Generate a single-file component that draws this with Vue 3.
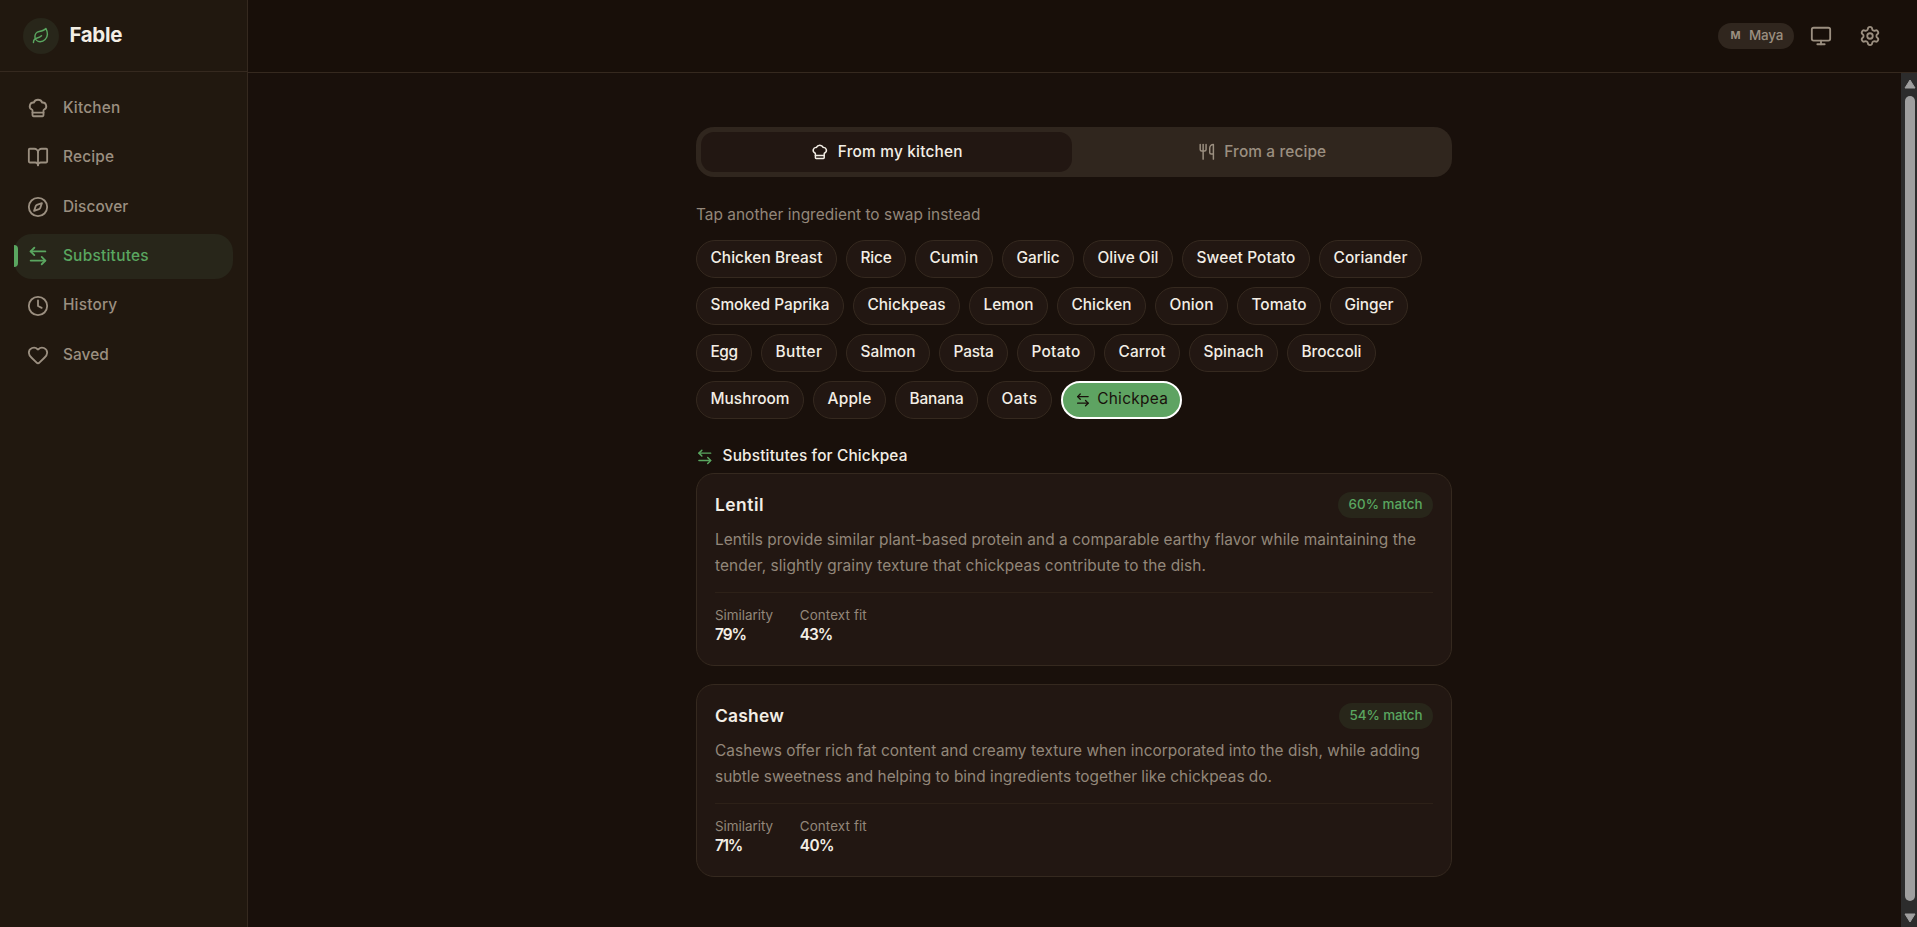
<script setup>
import { ref } from "vue";

const icons = {
  leaf: [
    "M11 20A7 7 0 0 1 9.8 6.1C15.5 5 17 4.48 19 2c1 2 2 4.18 2 8 0 5.5-4.78 10-10 10Z",
    "M2 21c0-3 1.85-5.36 5.08-6C9.5 14.52 12 13 13 12",
  ],
  chef: [
    "M17 21a1 1 0 0 0 1-1v-5.35c0-.457.316-.844.727-1.041a4 4 0 0 0-2.134-7.589 5 5 0 0 0-9.186 0 4 4 0 0 0-2.134 7.588c.411.198.727.585.727 1.041V20a1 1 0 0 0 1 1Z",
    "M6 17h12",
  ],
  book: [
    "M12 7v14",
    "M3 18a1 1 0 0 1-1-1V4a1 1 0 0 1 1-1h5a4 4 0 0 1 4 4 4 4 0 0 1 4-4h5a1 1 0 0 1 1 1v13a1 1 0 0 1-1 1h-6a3 3 0 0 0-3 3 3 3 0 0 0-3-3z",
  ],
  compass: [
    "M12 2a10 10 0 1 0 0 20 10 10 0 1 0 0-20Z",
    "m16.24 7.76-1.804 5.411a2 2 0 0 1-1.265 1.265L7.76 16.24l1.804-5.411a2 2 0 0 1 1.265-1.265z",
  ],
  swap: ["M8 3 4 7l4 4", "M4 7h16", "m16 21 4-4-4-4", "M20 17H4"],
  clock: ["M12 2a10 10 0 1 0 0 20 10 10 0 1 0 0-20Z", "M12 6v6l4 2"],
  heart: [
    "M2 9.5a5.5 5.5 0 0 1 9.591-3.676.56.56 0 0 0 .818 0A5.49 5.49 0 0 1 22 9.5c0 2.29-1.5 4-3 5.5l-5.492 5.313a2 2 0 0 1-3 .019L5 15c-1.5-1.5-3-3.2-3-5.5",
  ],
  utensils: [
    "M3 2v7c0 1.1.9 2 2 2h4a2 2 0 0 0 2-2V2",
    "M7 2v20",
    "M21 15V2a5 5 0 0 0-5 5v6c0 1.1.9 2 2 2h3Zm0 0v7",
  ],
  monitor: [
    "M4 3h16a2 2 0 0 1 2 2v10a2 2 0 0 1-2 2H4a2 2 0 0 1-2-2V5a2 2 0 0 1 2-2Z",
    "M8 21h8",
    "M12 17v4",
  ],
  settings: [
    "M9.671 4.136a2.34 2.34 0 0 1 4.659 0 2.34 2.34 0 0 0 3.319 1.915 2.34 2.34 0 0 1 2.33 4.033 2.34 2.34 0 0 0 0 3.831 2.34 2.34 0 0 1-2.33 4.033 2.34 2.34 0 0 0-3.319 1.915 2.34 2.34 0 0 1-4.659 0 2.34 2.34 0 0 0-3.32-1.915 2.34 2.34 0 0 1-2.33-4.033 2.34 2.34 0 0 0 0-3.831A2.34 2.34 0 0 1 6.35 6.051a2.34 2.34 0 0 0 3.319-1.915",
    "M12 9a3 3 0 1 0 0 6 3 3 0 1 0 0-6Z",
  ],
};

const nav = [
  { label: "Kitchen", icon: "chef", width: 57.5 },
  { label: "Recipe", icon: "book", width: 51.5 },
  { label: "Discover", icon: "compass", width: 65.5 },
  { label: "Substitutes", icon: "swap", width: 86 },
  { label: "History", icon: "clock", width: 54.5 },
  { label: "Saved", icon: "heart", width: 46 },
];
const activePage = ref("Substitutes");

const tabs = [
  { id: "kitchen", label: "From my kitchen", icon: "chef", width: 125 },
  { id: "recipe", label: "From a recipe", icon: "utensils", width: 102 },
];
const activeTab = ref("kitchen");

const ingredients = [
  ["Chicken Breast", 141],
  ["Rice", 60],
  ["Cumin", 78],
  ["Garlic", 72],
  ["Olive Oil", 90],
  ["Sweet Potato", 128],
  ["Coriander", 103],
  ["Smoked Paprika", 148],
  ["Chickpeas", 107],
  ["Lemon", 79],
  ["Chicken", 89],
  ["Onion", 73],
  ["Tomato", 84],
  ["Ginger", 78],
  ["Egg", 56],
  ["Butter", 76],
  ["Salmon", 84],
  ["Pasta", 69],
  ["Potato", 78],
  ["Carrot", 76],
  ["Spinach", 89],
  ["Broccoli", 89],
  ["Mushroom", 108],
  ["Apple", 73],
  ["Banana", 83],
  ["Oats", 65],
  ["Chickpea", 121],
];
const selected = ref("Chickpea");

const substitutes = [
  {
    name: "Lentil",
    nameWidth: 49,
    match: "60% match",
    badge: 95,
    lines: [
      ["Lentils provide similar plant-based protein and a comparable earthy flavor while maintaining the", 701],
      ["tender, slightly grainy texture that chickpeas contribute to the dish.", 491],
    ],
    similarity: ["79%", 31],
    context: ["43%", 32.5],
  },
  {
    name: "Cashew",
    nameWidth: 69,
    match: "54% match",
    badge: 94,
    lines: [
      ["Cashews offer rich fat content and creamy texture when incorporated into the dish, while adding", 705],
      ["subtle sweetness and helping to bind ingredients together like chickpeas do.", 557],
    ],
    similarity: ["71%", 27],
    context: ["40%", 34],
  },
];

// tracks the text so that it spans the given width
const vFit = (el, { value }) => {
  el.style.letterSpacing = "0px";
  const natural = el.getBoundingClientRect().width;
  el.style.letterSpacing = `${(value - natural) / el.textContent.length}px`;
};
</script>

<template>
  <div class="app">
    <aside class="sidebar">
      <div class="brand">
        <span class="logo">
          <svg class="icon small" viewBox="0 0 24 24">
            <path v-for="d in icons.leaf" :key="d" :d="d" />
          </svg>
        </span>
        <span v-fit="52.5" class="text brand-name">Fable</span>
      </div>
      <nav class="nav">
        <a
          v-for="item in nav"
          :key="item.label"
          class="nav-item"
          :class="{ active: item.label === activePage }"
          @click="activePage = item.label"
        >
          <svg class="icon" viewBox="0 0 24 24">
            <path v-for="d in icons[item.icon]" :key="d" :d="d" />
          </svg>
          <span v-fit="item.width" class="text">{{ item.label }}</span>
        </a>
      </nav>
    </aside>

    <div class="main">
      <header class="topbar">
        <div class="user">
          <span class="initial">M</span>
          <span v-fit="34" class="text">Maya</span>
        </div>
        <svg class="icon" viewBox="0 0 24 24">
          <path v-for="d in icons.monitor" :key="d" :d="d" />
        </svg>
        <svg class="icon" viewBox="0 0 24 24">
          <path v-for="d in icons.settings" :key="d" :d="d" />
        </svg>
      </header>

      <div class="body">
        <main class="page">
          <div class="content">
            <div class="tabs">
              <button
                v-for="tab in tabs"
                :key="tab.id"
                class="tab"
                :class="{ active: tab.id === activeTab }"
                @click="activeTab = tab.id"
              >
                <svg class="icon small" viewBox="0 0 24 24">
                  <path v-for="d in icons[tab.icon]" :key="d" :d="d" />
                </svg>
                <span v-fit="tab.width" class="text">{{ tab.label }}</span>
              </button>
            </div>

            <p class="hint">
              <span v-fit="284.5" class="text">Tap another ingredient to swap instead</span>
            </p>

            <div class="chips">
              <button
                v-for="[name, width] in ingredients"
                :key="name"
                class="chip"
                :class="{ selected: name === selected }"
                :style="{ width: `${width}px` }"
                @click="selected = name"
              >
                <svg v-if="name === selected" class="icon tiny" viewBox="0 0 24 24">
                  <path v-for="d in icons.swap" :key="d" :d="d" />
                </svg>
                <span v-fit="name === 'Chickpea' ? 71 : width - 29" class="text">{{ name }}</span>
              </button>
            </div>

            <h2 class="heading">
              <svg class="icon small" viewBox="0 0 24 24">
                <path v-for="d in icons.swap" :key="d" :d="d" />
              </svg>
              <span v-fit="185" class="text">Substitutes for {{ selected }}</span>
            </h2>

            <div class="cards">
              <article v-for="sub in substitutes" :key="sub.name" class="card">
                <div class="card-head">
                  <h3 class="card-title">
                    <span v-fit="sub.nameWidth" class="text">{{ sub.name }}</span>
                  </h3>
                  <span class="badge" :style="{ width: `${sub.badge}px` }">
                    <span v-fit="sub.badge - 21" class="text">{{ sub.match }}</span>
                  </span>
                </div>
                <p class="reason">
                  <template v-for="[line, width] in sub.lines" :key="line">
                    <span v-fit="width" class="text">{{ line }}</span><br />
                  </template>
                </p>
                <div class="stats">
                  <div class="stat">
                    <span v-fit="58" class="text label">Similarity</span>
                    <span v-fit="sub.similarity[1]" class="text value">{{ sub.similarity[0] }}</span>
                  </div>
                  <div class="stat">
                    <span v-fit="67" class="text label">Context fit</span>
                    <span v-fit="sub.context[1]" class="text value">{{ sub.context[0] }}</span>
                  </div>
                </div>
              </article>
            </div>
          </div>
        </main>

        <div class="scrollbar">
          <svg class="arrow" viewBox="0 0 12 10"><path d="M6 1 11 9H1Z" /></svg>
          <div class="thumb"></div>
          <svg class="arrow" viewBox="0 0 12 10"><path d="M6 9 1 1h10Z" /></svg>
        </div>
      </div>
    </div>
  </div>
</template>

<style>
body {
  margin: 0;
  background: #19100b;
}
</style>

<style scoped>
.app {
  display: flex;
  height: 100vh;
  overflow: hidden;
  background: #19100b;
  color: #f3eee5;
  font-family: Inter, "Liberation Sans", sans-serif;
  font-size: 15.4px;
}

.app * {
  box-sizing: border-box;
}

.text {
  display: inline-block;
  white-space: nowrap;
}

button {
  font: inherit;
  cursor: pointer;
}

.icon {
  width: 22px;
  height: 22px;
  flex: none;
  fill: none;
  stroke: currentColor;
  stroke-width: 2;
  stroke-linecap: round;
  stroke-linejoin: round;
}

.icon.small {
  width: 17.6px;
  height: 17.6px;
}

.icon.tiny {
  width: 15.8px;
  height: 15.8px;
}

.sidebar {
  width: 248px;
  flex: none;
  background: #21180f;
  border-right: 1px solid #35291f;
}

.brand {
  display: flex;
  align-items: center;
  gap: 10.5px;
  height: 72px;
  padding-left: 23px;
  border-bottom: 1px solid #35291f;
}

.logo {
  display: flex;
  align-items: center;
  justify-content: center;
  width: 36px;
  height: 36px;
  border-radius: 50%;
  background: #28261a;
  color: #5aa660;
}

.brand-name {
  padding-bottom: 2px;
  font-size: 20.5px;
  font-weight: 700;
}

.nav {
  display: flex;
  flex-direction: column;
  gap: 4.4px;
  padding: 13.6px 14px;
}

.nav-item {
  position: relative;
  display: flex;
  align-items: center;
  gap: 13.6px;
  height: 45px;
  padding-left: 13.3px;
  border-radius: 18px;
  color: #9b8f80;
  font-weight: 500;
  cursor: pointer;
}

.nav-item .text,
.tab .text,
.heading .text,
.card-title .text {
  padding-bottom: 1.4px;
}

.nav-item.active {
  background: #28261a;
  color: #5aa660;
}

.nav-item.active::before {
  content: "";
  position: absolute;
  left: 0;
  top: 11.5px;
  width: 4px;
  height: 22px;
  border-radius: 0 4px 4px 0;
  background: #5aa660;
}

.main {
  flex: 1;
  display: flex;
  flex-direction: column;
  min-width: 0;
}

.topbar {
  display: flex;
  align-items: center;
  justify-content: flex-end;
  height: 73px;
  padding-right: 36px;
  gap: 27px;
  border-bottom: 1px solid #35291f;
  background: #180f09;
  color: #9b8f80;
}

.user {
  display: flex;
  align-items: center;
  gap: 8.5px;
  width: 76px;
  height: 26px;
  margin-right: -11px;
  padding-left: 12.5px;
  padding-bottom: 1.6px;
  border-radius: 13px;
  background: #30261e;
  font-size: 13.4px;
  font-weight: 500;
}

.initial {
  font-size: 10.8px;
  font-weight: 700;
}

.body {
  flex: 1;
  display: flex;
  min-height: 0;
}

.page {
  flex: 1;
  display: flex;
  justify-content: center;
  padding: 54px 1px 0 0;
}

.content {
  width: 756px;
}

.tabs {
  display: flex;
  height: 50px;
  padding: 5px;
  gap: 4px;
  border-radius: 18px;
  background: #30261e;
}

.tab {
  flex: 1;
  display: flex;
  align-items: center;
  justify-content: center;
  gap: 9px;
  padding: 0 0 0 1px;
  border: 0;
  border-radius: 13px;
  background: none;
  color: #9b8f80;
  font-weight: 500;
}

.tab.active {
  background: #221712;
  color: #f3eee5;
}

.hint {
  margin: 25.5px 0 13.5px;
  color: #93877a;
  line-height: 24px;
}

.chips {
  display: flex;
  flex-wrap: wrap;
  gap: 9px;
}

.chip {
  display: flex;
  align-items: center;
  justify-content: center;
  gap: 6.5px;
  height: 38px;
  padding: 0 0 3.4px;
  border: 1px solid #35291f;
  border-radius: 19px;
  background: #221712;
  color: #f3eee5;
  font-weight: 500;
}

.chip.selected {
  border: 2px solid #fff;
  background: #5ea362;
  color: #19100b;
  font-weight: 400;
}

.chip.selected .icon {
  margin-top: 3px;
}

.heading {
  display: flex;
  align-items: center;
  gap: 9px;
  height: 24px;
  margin: 25.5px 0 4.5px;
  font-size: inherit;
  font-weight: 500;
}

.heading .icon {
  color: #5aa660;
}

.cards {
  display: flex;
  flex-direction: column;
  gap: 17.6px;
}

.card {
  height: 193.4px;
  padding: 18px;
  border: 1px solid #35291f;
  border-radius: 18px;
  background: #221712;
}

.card-head {
  display: flex;
  align-items: center;
  justify-content: space-between;
  height: 26px;
}

.card-title {
  margin: 0;
  font-size: 17.4px;
  font-weight: 600;
}

.badge {
  display: flex;
  align-items: center;
  justify-content: center;
  height: 26px;
  padding-bottom: 1.6px;
  border-radius: 13px;
  background: #28261a;
  color: #5aa660;
  font-size: 13.4px;
  font-weight: 500;
}

.reason {
  margin: 9.2px 0 14px;
  color: #93877a;
  line-height: 25.4px;
}

.reason .text {
  vertical-align: top;
}

.stats {
  display: flex;
  gap: 26.8px;
  padding-top: 12.8px;
  border-top: 1px solid #2d2118;
}

.stat {
  display: flex;
  flex-direction: column;
  align-items: flex-start;
}

.label {
  color: #93877a;
  font-size: 13.4px;
  line-height: 18px;
}

.value {
  font-weight: 600;
  line-height: 22.4px;
}

.scrollbar {
  display: flex;
  flex-direction: column;
  align-items: center;
  gap: 7px;
  width: 16px;
  padding: 6px 0 4px 2px;
  background: #2c2c2c;
}

.arrow {
  width: 12px;
  height: 10px;
  flex: none;
  fill: #9f9f9f;
  stroke: #9f9f9f;
  stroke-linejoin: round;
}

.thumb {
  flex: 1;
  width: 10px;
  margin-bottom: 5px;
  border-radius: 5px;
  background: #9f9f9f;
}
</style>
